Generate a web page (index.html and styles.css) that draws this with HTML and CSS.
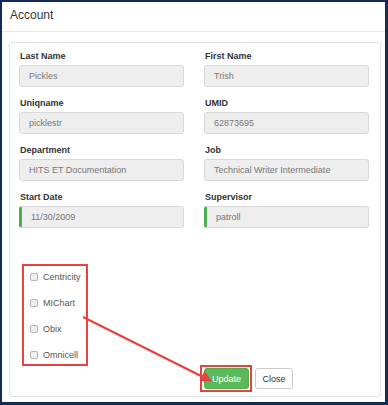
FILE: index.html
```html
<!DOCTYPE html>
<html lang="en">
<head>
    <meta charset="UTF-8">
    <title>Account</title>
    <link rel="stylesheet" href="styles.css">
</head>
<body>
    <div class="modal">
        <header class="modal-header">Account</header>

        <div class="modal-body">
            <div class="panel">
                <div class="field-grid">
                    <div class="field">
                        <label>Last Name</label>
                        <div class="field-input">Pickles</div>
                    </div>
                    <div class="field">
                        <label>First Name</label>
                        <div class="field-input">Trish</div>
                    </div>
                    <div class="field">
                        <label>Uniqname</label>
                        <div class="field-input">picklestr</div>
                    </div>
                    <div class="field">
                        <label>UMID</label>
                        <div class="field-input">62873695</div>
                    </div>
                    <div class="field">
                        <label>Department</label>
                        <div class="field-input">HITS ET Documentation</div>
                    </div>
                    <div class="field">
                        <label>Job</label>
                        <div class="field-input">Technical Writer Intermediate</div>
                    </div>
                    <div class="field">
                        <label>Start Date</label>
                        <div class="field-input field-valid">11/30/2009</div>
                    </div>
                    <div class="field">
                        <label>Supervisor</label>
                        <div class="field-input field-valid">patroll</div>
                    </div>
                </div>

                <div class="systems highlight">
                    <label class="system"><input type="checkbox"> Centricity</label>
                    <label class="system"><input type="checkbox"> MIChart</label>
                    <label class="system"><input type="checkbox"> Obix</label>
                    <label class="system"><input type="checkbox"> Omnicell</label>
                </div>

                <div class="panel-footer">
                    <div class="actions">
                        <span class="highlight highlight-btn">
                            <button class="btn btn-update">Update</button>
                        </span>
                        <button class="btn btn-close">Close</button>
                    </div>
                </div>
            </div>
        </div>

        <!-- annotation arrow -->
        <svg class="arrow" width="388" height="405" viewBox="0 0 388 405">
            <line x1="83" y1="317" x2="203" y2="377" stroke="#e8423f" stroke-width="2.2"/>
            <polygon points="212,381.5 199.5,381 204.5,371" fill="#e8423f"/>
        </svg>
    </div>
</body>
</html>
```

FILE: styles.css
```css
* {
    box-sizing: border-box;
}

body {
    margin: 0;
    font-family: "Liberation Sans", Arial, sans-serif;
    background: white;
}

.modal {
    position: relative;
    width: 388px;
    height: 405px;
    border: 2px solid #102a5c;
    border-right-width: 3px;
    border-bottom-width: 3px;
    background: white;
}

.modal-header {
    height: 30px;
    padding: 6px 8px 0;
    font-size: 12px;
    color: #333;
    border-bottom: 1px solid #e8e8e8;
}

.modal-body {
    padding: 10px 4px 0 7px;
}

.panel {
    border: 1px solid #e3e3e3;
    border-radius: 3px;
    padding: 7px 9px 2px 9px;
    height: 355px;
}

.field-grid {
    display: grid;
    grid-template-columns: 165px 165px;
    column-gap: 20px;
    row-gap: 10px;
}

.field label {
    display: block;
    font-size: 9px;
    font-weight: bold;
    color: #333;
    line-height: 12px;
    margin-bottom: 3px;
    padding-left: 1px;
}

.field-input {
    height: 22px;
    line-height: 20px;
    padding-left: 9px;
    font-size: 9px;
    color: #777;
    background: #eee;
    border: 1px solid #d9d9d9;
    border-radius: 3px;
}

.field-valid {
    border-left: 3px solid #4cb050;
    padding-left: 9px;
}

.highlight {
    border: 2px solid #e8423f;
}

.systems {
    width: 66px;
    margin: 36px 0 0 3px;
    padding: 2px 0 0 6px;
    display: flex;
    flex-direction: column;
    gap: 8px;
}

.system {
    display: flex;
    align-items: center;
    height: 18px;
    font-size: 9px;
    color: #555;
}

.system input {
    appearance: none;
    width: 8px;
    height: 8px;
    margin: 0 5px 0 0;
    border: 1px solid #b5b5b5;
    border-radius: 2px;
    background: #eee;
}

.panel-footer {
    display: grid;
    grid-template-columns: 165px 165px;
    column-gap: 20px;
    margin-top: -1px;
}

.actions {
    grid-column: 2;
    display: flex;
    align-items: center;
    gap: 3px;
    margin-left: -4px;
}

.highlight-btn {
    display: flex;
    padding: 1px 1px 1px 2px;
}

.btn {
    height: 21px;
    padding: 0 6px;
    font-family: inherit;
    font-size: 9px;
    border-radius: 3px;
    border: 1px solid #ccc;
    background: white;
    color: #333;
}

.btn-update {
    width: 45px;
    background: #5cb85c;
    border-color: #4cae4c;
    color: white;
}

.btn-close {
    width: 38px;
}

.arrow {
    position: absolute;
    top: -2px;
    left: -2px;
    pointer-events: none;
}
```
